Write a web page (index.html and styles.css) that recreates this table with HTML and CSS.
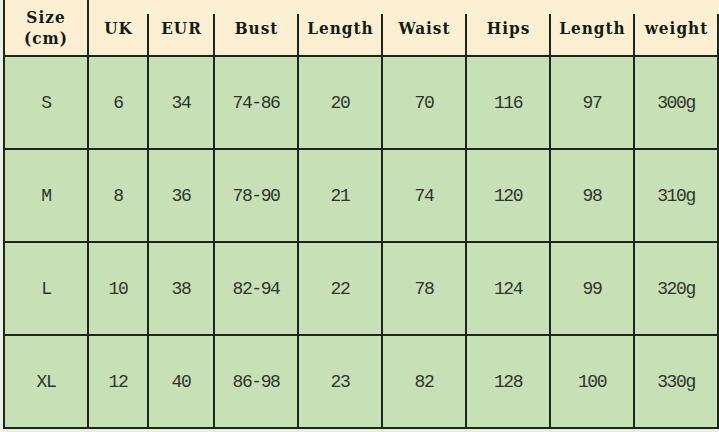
FILE: index.html
```html
<!DOCTYPE html>
<html>
<head>
<meta charset="utf-8">
<link rel="stylesheet" href="styles.css">
</head>
<body>
<div class="chart">
  <div class="h first">Size<br>(cm)</div>
  <div class="h">UK</div>
  <div class="h">EUR</div>
  <div class="h">Bust</div>
  <div class="h">Length</div>
  <div class="h">Waist</div>
  <div class="h">Hips</div>
  <div class="h">Length</div>
  <div class="h">weight</div>

  <div class="c">S</div><div class="c">6</div><div class="c">34</div><div class="c">74-86</div><div class="c">20</div><div class="c">70</div><div class="c">116</div><div class="c">97</div><div class="c">300g</div>
  <div class="c">M</div><div class="c">8</div><div class="c">36</div><div class="c">78-90</div><div class="c">21</div><div class="c">74</div><div class="c">120</div><div class="c">98</div><div class="c">310g</div>
  <div class="c">L</div><div class="c">10</div><div class="c">38</div><div class="c">82-94</div><div class="c">22</div><div class="c">78</div><div class="c">124</div><div class="c">99</div><div class="c">320g</div>
  <div class="c">XL</div><div class="c">12</div><div class="c">40</div><div class="c">86-98</div><div class="c">23</div><div class="c">82</div><div class="c">128</div><div class="c">100</div><div class="c">330g</div>
</div>
</body>
</html>
```
FILE: styles.css
```css
html, body {
  margin: 0;
  padding: 0;
}
body {
  background: #ecefe6;
  width: 719px;
  height: 432px;
  overflow: hidden;
  font-family: "Liberation Mono", "DejaVu Sans Mono", monospace;
}
.chart {
  margin-left: 3px;
  border-left: 2px solid #1d261c;
  display: grid;
  grid-template-columns: 84px 60px 66px 84px 84px 84px 84px 84px 84px;
  grid-template-rows: 57px 93px 93px 93px 93px;
  width: 716px;
  background: #fdf0d2;
  box-sizing: border-box;
}
.h {
  box-sizing: border-box;
  border-bottom: 2px solid #1d261c;
  background: #fdf0d2 linear-gradient(#1d261c, #1d261c) right 0 top 14px / 2px 100% no-repeat;
  display: flex;
  align-items: center;
  justify-content: center;
  text-align: center;
  font-family: "DejaVu Serif", "Liberation Serif", serif;
  font-stretch: condensed;
  font-weight: bold;
  font-size: 17px;
  line-height: 21px;
  color: #151a14;
  letter-spacing: 1px;
  padding-top: 1px;
  padding-right: 1px;
}
.h.first {
  background: #fdf0d2;
  border-right: 2px solid #1d261c;
  padding-right: 0;
  padding-top: 0;
}
.c {
  box-sizing: border-box;
  background: #c8e0b6;
  border-right: 2px solid #1d261c;
  border-bottom: 2px solid #1d261c;
  display: flex;
  align-items: center;
  justify-content: center;
  font-size: 18px;
  letter-spacing: -1.4px;
  color: #2e352c;
}
```
